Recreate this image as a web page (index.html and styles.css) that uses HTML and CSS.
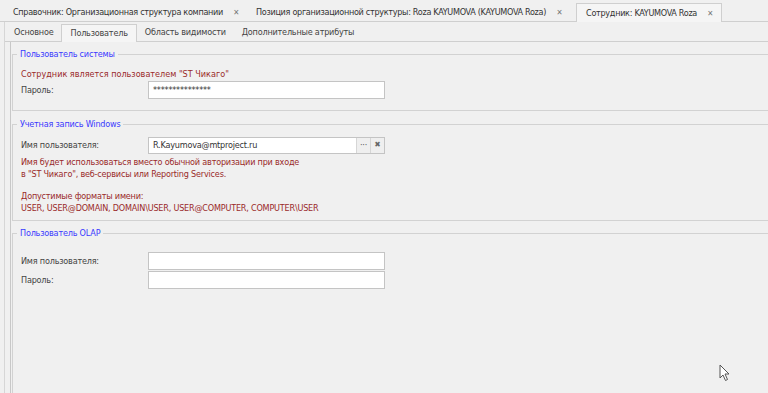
FILE: index.html
```html
<!DOCTYPE html>
<html lang="ru">
<head>
  <meta charset="UTF-8" />
  <title>Сотрудник: KAYUMOVA Roza</title>
  <link rel="stylesheet" href="styles.css">
</head>
<body>

  <div class="doc-tabs">
    <div class="doc-tab">Справочник: Организационная структура компании <span class="close">✕</span></div>
    <div class="doc-tab">Позиция организационной структуры: Roza KAYUMOVA (KAYUMOVA Roza) <span class="close">✕</span></div>
    <div class="doc-tab active">Сотрудник: KAYUMOVA Roza <span class="close">✕</span></div>
  </div>

  <div class="doc-pane">
    <div class="form-tabs">
      <div class="form-tab">Основное</div>
      <div class="form-tab active">Пользователь</div>
      <div class="form-tab">Область видимости</div>
      <div class="form-tab">Дополнительные атрибуты</div>
    </div>

    <div class="form-pane">
      <fieldset class="group group-system">
        <legend>Пользователь системы</legend>
        <p class="note">Сотрудник является пользователем "ST Чикаго"</p>
        <div class="row">
          <label>Пароль:</label>
          <input type="text" class="field" value="***************" />
        </div>
      </fieldset>

      <fieldset class="group group-windows">
        <legend>Учетная запись Windows</legend>
        <div class="row">
          <label>Имя пользователя:</label>
          <div class="combo">
            <input type="text" class="field" value="R.Kayumova@mtproject.ru" />
            <span class="combo-btn">···</span>
            <span class="combo-btn clear">✖</span>
          </div>
        </div>
        <p class="note">Имя будет использоваться вместо обычной авторизации при входе<br>в "ST Чикаго", веб-сервисы или Reporting Services.</p>
        <p class="note gap">Допустимые форматы имени:<br>USER, USER@DOMAIN, DOMAIN\USER, USER@COMPUTER, COMPUTER\USER</p>
      </fieldset>

      <fieldset class="group group-olap">
        <legend>Пользователь OLAP</legend>
        <div class="row">
          <label>Имя пользователя:</label>
          <input type="text" class="field" value="" />
        </div>
        <div class="row">
          <label>Пароль:</label>
          <input type="text" class="field" value="" />
        </div>
      </fieldset>
    </div>
  </div>

  <svg class="cursor" width="12" height="18" viewBox="0 0 12 18">
    <path d="M1 1 L1 14 L4 11 L6.5 16.5 L8.5 15.5 L6 10 L10 10 Z" fill="#fff" stroke="#555" stroke-width="1" />
  </svg>

</body>
</html>
```

FILE: styles.css
```css
* {
  margin: 0;
  padding: 0;
  box-sizing: border-box;
}

body {
  background: #f0f0f0;
  color: #444;
  font-family: 'DejaVu Sans Condensed', 'Liberation Sans', Arial, sans-serif;
  font-size: 9px;
  letter-spacing: -0.2px;
  height: 393px;
  overflow: hidden;
  position: relative;
}

/* верхние вкладки документов */
.doc-tabs {
  display: flex;
  height: 22px;
  padding: 3px 0 0 4px;
  border-bottom: 1px solid #cfcfcf;
  letter-spacing: -0.3px;
}

.doc-tab {
  padding: 0 8px 0 9px;
  line-height: 18px;
  color: #333;
  white-space: nowrap;
}

.doc-tab .close {
  margin-left: 8px;
  color: #777;
  font-size: 8px;
}

.doc-tab.active {
  background: #f5f5f5;
  border: 1px solid #cfcfcf;
  border-bottom: none;
  height: 19px;
  margin-left: 6px;
}

.doc-pane {
  margin-left: 4px;
  border-left: 1px solid #d6d6d6;
  height: 371px;
}

/* вкладки формы */
.form-tabs {
  display: flex;
  height: 20px;
  padding: 2px 0 0 1px;
  border-bottom: 1px solid #cfcfcf;
}

.form-tab {
  padding: 0 8px;
  line-height: 17px;
  color: #444;
}

.form-tab.active {
  background: #f5f5f5;
  border: 1px solid #cfcfcf;
  border-bottom: none;
  height: 18px;
}

.form-pane {
  margin-left: 5px;
  border-left: 1px solid #c8c8c8;
  height: 351px;
  padding: 6px 0 0 1px;
  overflow: hidden;
}

/* группы */
.group {
  border: 1px solid #d2d2d2;
  margin-right: -20px;
  padding: 0 0 10px 8px;
  margin-bottom: 6px;
}

.group legend {
  color: #3a3aff;
  padding: 0 3px;
  margin-left: -4px;
  line-height: 13px;
}

.group-system {
  margin-bottom: 7px;
}

.group-windows {
  padding-bottom: 6px;
}

.group-olap {
  padding-top: 12px;
  height: 300px;
}

.note {
  color: #9a2a2a;
  line-height: 12px;
}

.group-system .note {
  margin: 6px 0 0;
  line-height: 14px;
  letter-spacing: 0;
}

.group-windows .row {
  margin: 5px 0 2px;
}

.note.gap {
  margin-top: 10px;
}

.row {
  display: flex;
  align-items: center;
  height: 18px;
  margin-bottom: 1px;
}

.row label {
  width: 127px;
  color: #444;
}

.field {
  width: 237px;
  height: 18px;
  border: 1px solid #c4c4c4;
  background: #fff;
  padding: 0 4px;
  font-family: inherit;
  font-size: 9px;
  letter-spacing: -0.2px;
  color: #333;
  outline: none;
}

.combo {
  display: flex;
  width: 237px;
  height: 17px;
  border: 1px solid #c4c4c4;
  background: #fff;
}

.combo .field {
  flex: 1;
  width: auto;
  height: 15px;
  border: none;
}

.combo-btn {
  width: 14px;
  border-left: 1px solid #d6d6d6;
  background: #efefef;
  text-align: center;
  line-height: 14px;
  font-size: 9px;
  color: #555;
}

.combo-btn.clear {
  font-size: 8px;
  color: #666;
}

.cursor {
  position: absolute;
  left: 719px;
  top: 364px;
}
```
